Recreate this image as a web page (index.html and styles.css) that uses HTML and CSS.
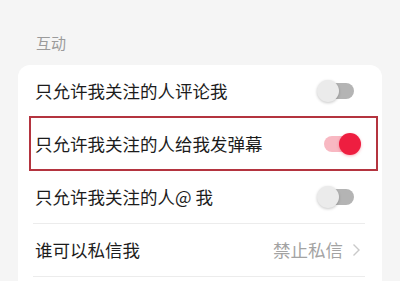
FILE: index.html
```html
<!DOCTYPE html>
<html lang="zh">
<head>
<meta charset="utf-8">
<link rel="stylesheet" href="styles.css">
</head>
<body>
<div class="page">
  <div class="section-title">互动</div>
  <div class="card">
    <div class="row">
      <span class="label">只允许我关注的人评论我</span>
      <span class="toggle"><span class="track"></span><span class="knob"></span></span>
    </div>
    <div class="row row-marked">
      <span class="label">只允许我关注的人给我发弹幕</span>
      <span class="toggle on"><span class="track"></span><span class="knob"></span></span>
    </div>
    <div class="row">
      <span class="label">只允许我关注的人@ 我</span>
      <span class="toggle"><span class="track"></span><span class="knob"></span></span>
    </div>
    <div class="row">
      <span class="label">谁可以私信我</span>
      <span class="value">禁止私信
        <svg class="chev" width="9" height="14" viewBox="0 0 9 14"><polyline points="1.5,1.5 7,7 1.5,12.5" fill="none" stroke="#c9c9c9" stroke-width="1.4"/></svg>
      </span>
    </div>
    <div class="row"></div>
  </div>
</div>
</body>
</html>
```
FILE: styles.css
```css
html, body {
  margin: 0;
  padding: 0;
  background: #f5f5f5;
}
body {
  font-family: "Noto Sans CJK SC", "Noto Sans", sans-serif;
  width: 400px;
  height: 281px;
  overflow: hidden;
}
.page {
  padding-top: 33px;
}
.section-title {
  padding-left: 36px;
  font-size: 15px;
  line-height: 20px;
  color: #9b9b9b;
  height: 20px;
}
.card {
  position: relative;
  margin: 12px 0 0 18px;
  width: 364px;
  background: #fff;
  border-radius: 12px;
  padding: 0 17px 0 15px;
  box-sizing: border-box;
}
.row {
  position: relative;
  height: 53px;
  box-sizing: border-box;
  border-bottom: 1px solid #ececec;
  display: flex;
  align-items: center;
  justify-content: space-between;
  padding: 0 4px 0 2px;
}
.label {
  font-size: 17.5px;
  color: #1c1c1c;
  line-height: 24px;
}
.row-marked::after {
  content: "";
  position: absolute;
  left: -4px;
  right: -13px;
  top: -2px;
  bottom: -1px;
  border: 2px solid #b4343f;
  pointer-events: none;
}
.toggle {
  position: relative;
  width: 44px;
  height: 22px;
  flex: none;
}
.track {
  position: absolute;
  left: 7px;
  right: 7px;
  top: 3px;
  height: 16px;
  border-radius: 8px;
  background: #b4b4b4;
}
.knob {
  position: absolute;
  left: 0;
  top: 0;
  width: 22px;
  height: 22px;
  border-radius: 50%;
  background: #ebebeb;
  box-shadow: 0 1px 3px rgba(0,0,0,0.22);
}
.toggle.on .track {
  background: #f8b8c2;
}
.toggle.on .knob {
  left: 22px;
  background: #ee1e40;
  box-shadow: 0 1px 3px rgba(238,30,64,0.35);
}
.value {
  display: flex;
  align-items: center;
  gap: 9px;
  font-size: 17.5px;
  line-height: 24px;
  color: #a3a3a3;
  padding-right: 0;
}
.chev {
  display: block;
}
```
